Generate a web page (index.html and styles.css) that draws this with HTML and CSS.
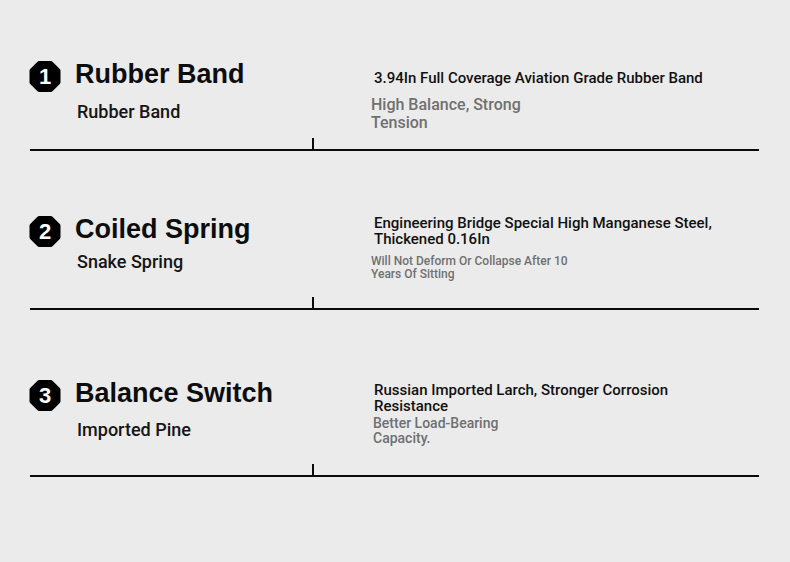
FILE: index.html
```html
<!DOCTYPE html>
<html lang="en">
<head>
<meta charset="utf-8">
<title>Specs</title>
<link rel="stylesheet" href="styles.css">
</head>
<body>
<main class="specs">
  <section class="item item-1">
    <div class="body">
      <div class="left">
        <div class="head">
          <div class="badge"><svg viewBox="0 0 32 32"><polygon points="10,2.5 22,2.5 29.5,10 29.5,22 22,29.5 10,29.5 2.5,22 2.5,10"/></svg><span>1</span></div>
          <h2 class="title">Rubber Band</h2>
        </div>
        <p class="sub">Rubber Band</p>
      </div>
      <div class="right">
        <p class="lead">3.94In Full Coverage Aviation Grade Rubber Band</p>
        <p class="note note-lg">High Balance, Strong Tension</p>
      </div>
    </div>
    <div class="rule"><span class="rule-l"></span><span class="rule-r"></span></div>
  </section>

  <section class="item item-2">
    <div class="body">
      <div class="left">
        <div class="head">
          <div class="badge"><svg viewBox="0 0 32 32"><polygon points="10,2.5 22,2.5 29.5,10 29.5,22 22,29.5 10,29.5 2.5,22 2.5,10"/></svg><span>2</span></div>
          <h2 class="title">Coiled Spring</h2>
        </div>
        <p class="sub">Snake Spring</p>
      </div>
      <div class="right">
        <p class="lead">Engineering Bridge Special High Manganese Steel, Thickened 0.16In</p>
        <p class="note note-sm">Will Not Deform Or Collapse After 10 Years Of Sitting</p>
      </div>
    </div>
    <div class="rule"><span class="rule-l"></span><span class="rule-r"></span></div>
  </section>

  <section class="item item-3">
    <div class="body">
      <div class="left">
        <div class="head">
          <div class="badge"><svg viewBox="0 0 32 32"><polygon points="10,2.5 22,2.5 29.5,10 29.5,22 22,29.5 10,29.5 2.5,22 2.5,10"/></svg><span>3</span></div>
          <h2 class="title">Balance Switch</h2>
        </div>
        <p class="sub">Imported Pine</p>
      </div>
      <div class="right">
        <p class="lead">Russian Imported Larch, Stronger Corrosion Resistance</p>
        <p class="note note-md">Better Load-Bearing Capacity.</p>
      </div>
    </div>
    <div class="rule"><span class="rule-l"></span><span class="rule-r"></span></div>
  </section>
</main>
</body>
</html>
```

FILE: styles.css
```css
* { box-sizing: border-box; }

html, body {
  margin: 0;
  padding: 0;
  background: #ebebeb;
}

body {
  width: 790px;
  height: 562px;
  overflow: hidden;
  font-family: Roboto, "Liberation Sans", Arial, sans-serif;
  color: #111;
}

p, h2 { margin: 0; }

.specs {
  display: flex;
  flex-direction: column;
  padding: 58px 31px 0 30px;
}

.item-1 { --top: 0px;  --body-h: 80px; --sub-gap: 9px;  --right-top: 12px; --right-gap: 10px; }
.item-2 { --top: 62px; --body-h: 84px; --sub-gap: 4px;  --right-top: 2px;  --right-gap: 8px; }
.item-3 { --top: 67px; --body-h: 87px; --sub-gap: 8px;  --right-top: 5px;  --right-gap: 2px; }

.item {
  margin-top: var(--top);
  display: flex;
  flex-direction: column;
}

.body {
  height: var(--body-h);
  display: grid;
  grid-template-columns: 341px 1fr;
}

.head {
  display: flex;
  align-items: flex-start;
  gap: 14px;
}

.badge {
  width: 32px;
  height: 31px;
  margin-top: 3px;
  margin-left: -1px;
  display: grid;
  place-items: center;
}

.badge svg,
.badge span {
  grid-area: 1 / 1;
}

.badge svg {
  width: 32px;
  height: 31px;
  display: block;
}

.badge polygon {
  fill: #000;
  stroke: #000;
  stroke-width: 5;
  stroke-linejoin: round;
}

.badge span {
  color: #fff;
  font-family: "Liberation Sans", Arial, sans-serif;
  font-size: 22px;
  line-height: 31px;
  font-weight: 700;
}

.title {
  font-family: "Liberation Sans", Arial, sans-serif;
  font-weight: 700;
  font-size: 27px;
  line-height: 32px;
  color: #0d0d0d;
}

.sub {
  margin-top: var(--sub-gap);
  padding-left: 47px;
  font-size: 18px;
  line-height: 22px;
  font-weight: 500;
  color: #151515;
}

.right {
  padding-top: var(--right-top);
}

.lead {
  width: 348px;
  font-size: 15px;
  line-height: 16px;
  font-weight: 500;
  color: #111;
  padding-left: 3px;
}

.note {
  margin-top: var(--right-gap);
  color: #707070;
}

.note-lg {
  width: 165px;
  font-size: 16px;
  line-height: 18px;
  font-weight: 500;
}

.note-sm {
  width: 205px;
  font-size: 12px;
  line-height: 13px;
  font-weight: 500;
}

.note-md {
  width: 140px;
  font-size: 14px;
  line-height: 15px;
  font-weight: 500;
  padding-left: 2px;
}

.rule {
  display: flex;
  align-items: flex-end;
}

.rule-l {
  width: 284px;
  height: 13px;
  border-right: 2px solid #0a0a0a;
  border-bottom: 2px solid #0a0a0a;
}

.rule-r {
  flex: 1;
  height: 2px;
  background: #0a0a0a;
}
```
